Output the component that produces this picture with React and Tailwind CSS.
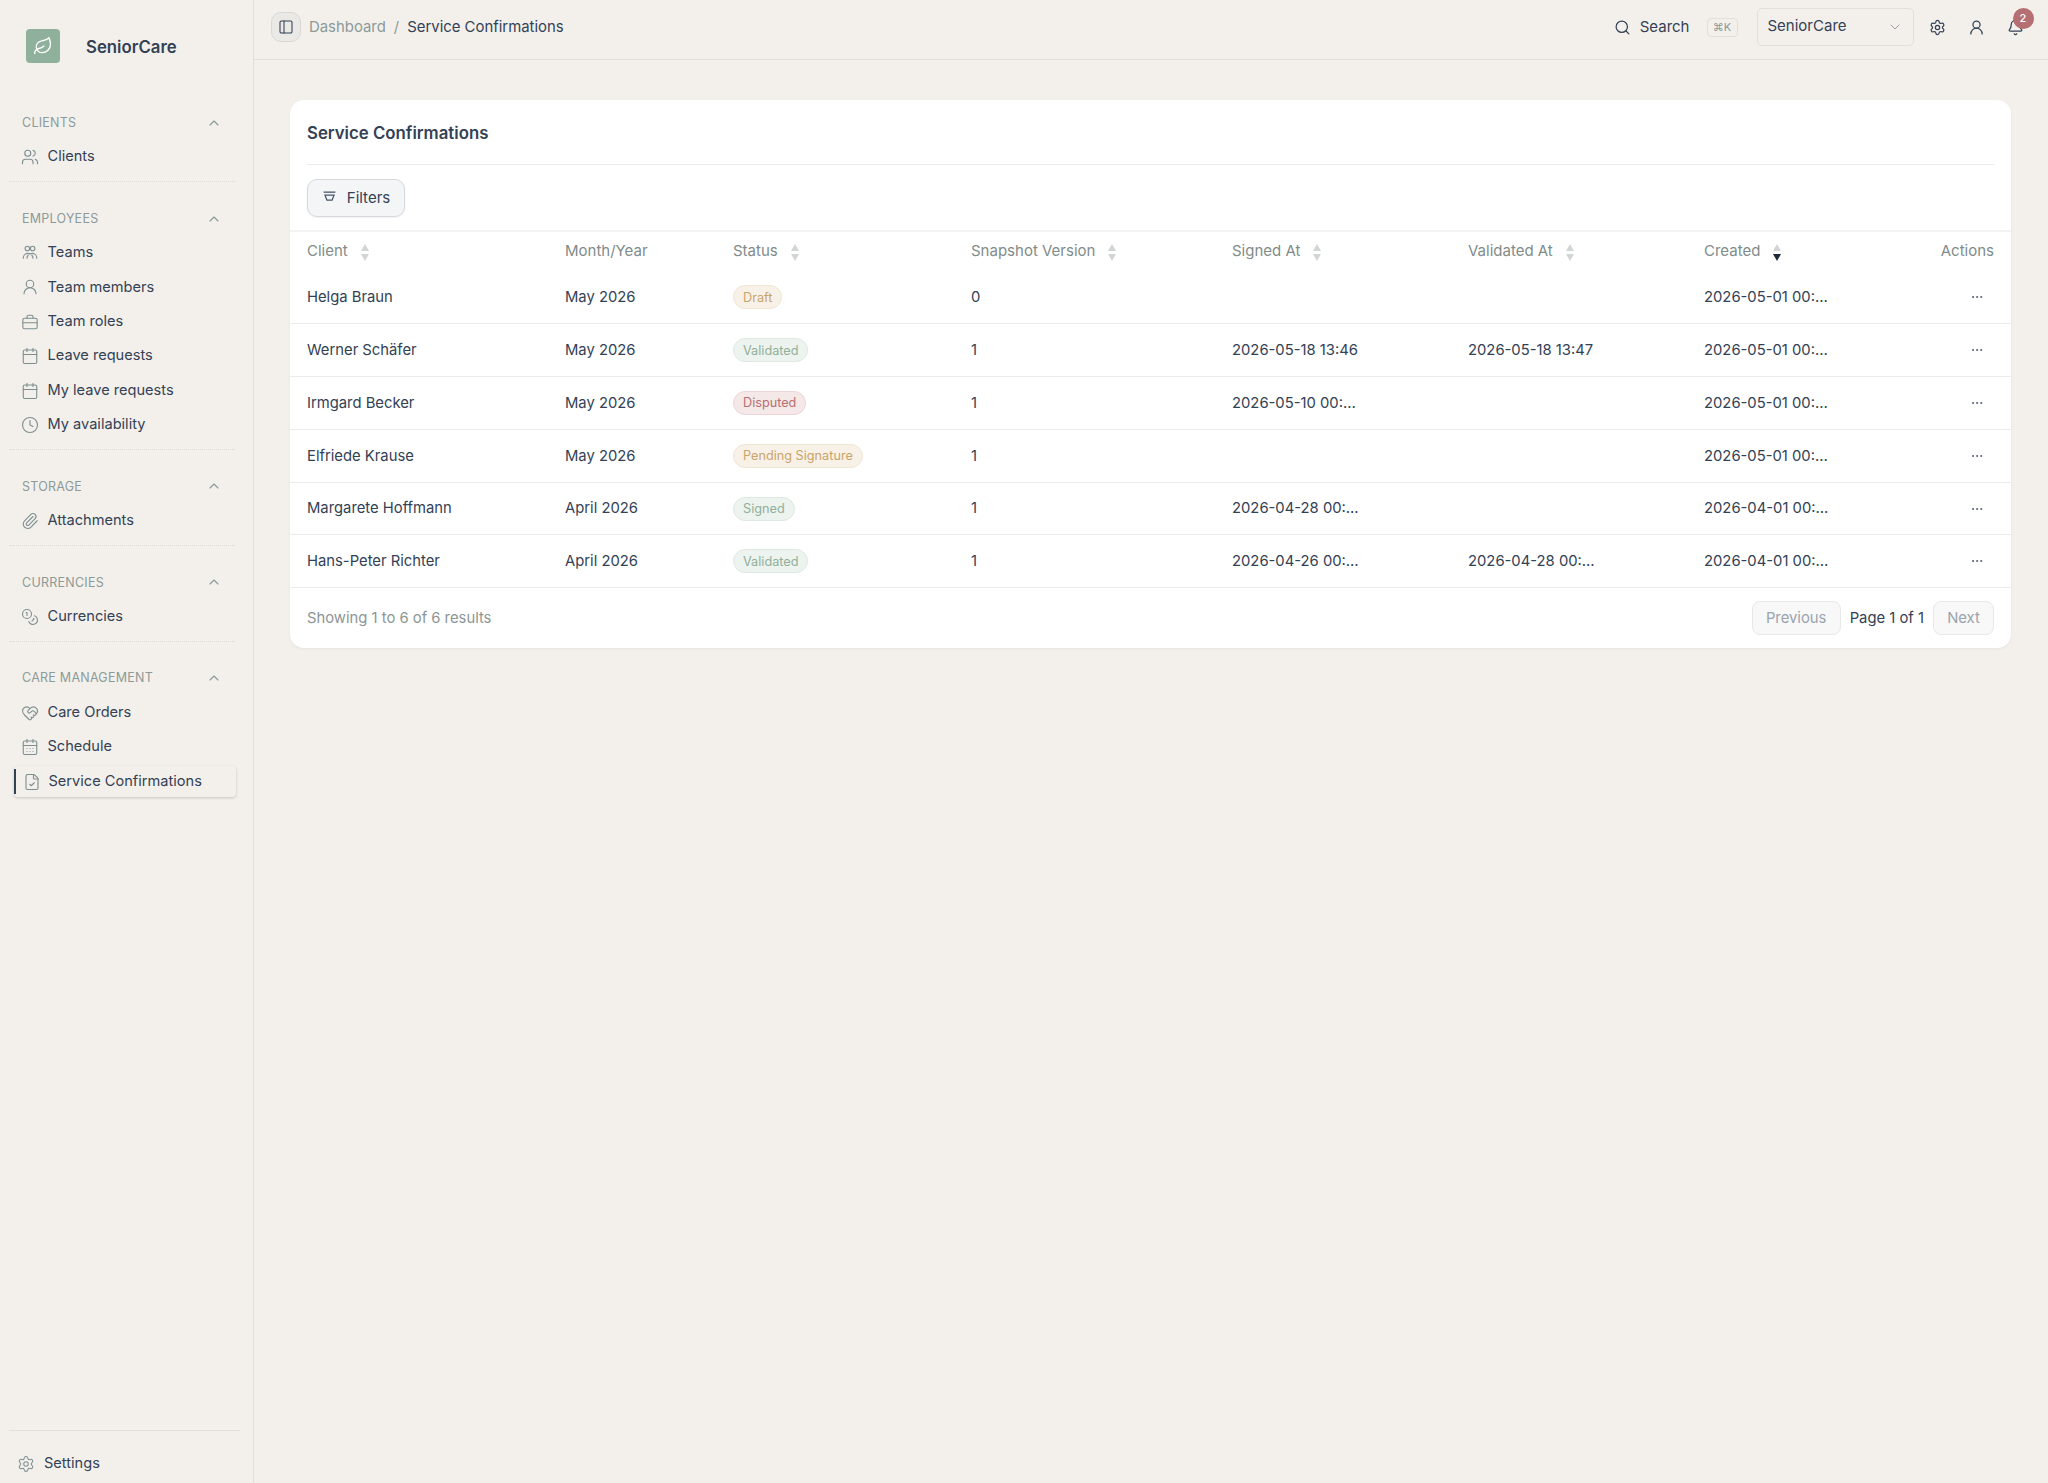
import {
  Users, UserRound, Calendar, Clock, Paperclip, Coins, HeartHandshake, CalendarDays,
  FileCheck, Settings, Bell, Search, ChevronDown, ChevronUp, PanelLeft, Leaf, Ellipsis,
} from 'lucide-react'

function TeamsIcon({ size = 18, className }) {
  return (
    <svg width={size} height={size} viewBox="0 0 24 24" fill="none" stroke="currentColor" strokeWidth="1.5" strokeLinecap="round" className={className}>
      <circle cx="8.500" cy="6" r="3" />
      <circle cx="15.500" cy="6" r="3" />
      <path d="M3 19c0-3.500 2.500-6.500 6-6.500 1.200 0 2.200.3 3 .9.8-.6 1.800-.9 3-.9 3.500 0 6 3 6 6.500" />
      <path d="M8 19c0-1.500.5-3 1.500-4M16 19c0-1.500-.5-3-1.500-4" />
    </svg>
  )
}

function RolesIcon({ size = 18, className }) {
  return (
    <svg width={size} height={size} viewBox="0 0 24 24" fill="none" stroke="currentColor" strokeWidth="1.5" strokeLinecap="round" strokeLinejoin="round" className={className}>
      <rect x="2.500" y="7" width="19" height="14" rx="2" />
      <path d="M8 7V5a2 2 0 0 1 2-2h4a2 2 0 0 1 2 2v2" />
      <path d="M2.500 13h19" />
    </svg>
  )
}

function FilterIcon() {
  return (
    <svg width="15" height="15" viewBox="0 0 14 14" fill="none" stroke="currentColor" strokeWidth="1.2" className="text-[#475569] -mt-[2px]">
      <path d="M1.500 2h11" />
      <path d="M2.800 4.800h8.400l-1.800 4.700H4.600z" />
    </svg>
  )
}

const sections = [
  { label: 'Clients', items: [{ name: 'Clients', icon: Users }] },
  {
    label: 'Employees',
    items: [
      { name: 'Teams', icon: TeamsIcon },
      { name: 'Team members', icon: UserRound },
      { name: 'Team roles', icon: RolesIcon },
      { name: 'Leave requests', icon: Calendar },
      { name: 'My leave requests', icon: Calendar },
      { name: 'My availability', icon: Clock },
    ],
  },
  { label: 'Storage', items: [{ name: 'Attachments', icon: Paperclip }] },
  { label: 'Currencies', items: [{ name: 'Currencies', icon: Coins }] },
  {
    label: 'Care Management',
    last: true,
    items: [
      { name: 'Care Orders', icon: HeartHandshake },
      { name: 'Schedule', icon: CalendarDays },
    ],
  },
]

const badgeStyles = {
  Draft: 'bg-[#f8f1e8] border-[#f1e5d3] text-[#c9a468]',
  'Pending Signature': 'bg-[#f8f1e8] border-[#f1e5d3] text-[#c9a468]',
  Validated: 'bg-[#edf3ee] border-[#dfe9e2] text-[#8fb09a]',
  Signed: 'bg-[#edf3ee] border-[#dfe9e2] text-[#8fb09a]',
  Disputed: 'bg-[#f5e8e8] border-[#edd5d7] text-[#b56f72]',
}

const rows = [
  ['Helga Braun', 'May 2026', 'Draft', '0', '', '', '2026-05-01 00:…'],
  ['Werner Schäfer', 'May 2026', 'Validated', '1', '2026-05-18 13:46', '2026-05-18 13:47', '2026-05-01 00:…'],
  ['Irmgard Becker', 'May 2026', 'Disputed', '1', '2026-05-10 00:…', '', '2026-05-01 00:…'],
  ['Elfriede Krause', 'May 2026', 'Pending Signature', '1', '', '', '2026-05-01 00:…'],
  ['Margarete Hoffmann', 'April 2026', 'Signed', '1', '2026-04-28 00:…', '', '2026-04-01 00:…'],
  ['Hans-Peter Richter', 'April 2026', 'Validated', '1', '2026-04-26 00:…', '2026-04-28 00:…', '2026-04-01 00:…'],
]

function NavItem({ name, icon: Icon }) {
  return (
    <a className="h-[34.4px] pl-[21px] flex items-center gap-[8.5px] text-[#334155]">
      <Icon size={18} strokeWidth={1.5} className="text-[#7f8f90] shrink-0" />
      <span>{name}</span>
    </a>
  )
}

function Sidebar() {
  return (
    <aside className="w-[254px] shrink-0 border-r border-[#e2dfda] flex flex-col justify-between text-[14.6px]">
      <div>
        <div className="h-[106.5px] pl-[26px] pt-[29px] flex items-start gap-[26px]">
          <div className="w-[34px] h-[34px] rounded-[4px] bg-[#8fb09a] flex items-center justify-center">
            <Leaf size={20} strokeWidth={1.6} className="text-white" />
          </div>
          <div className="h-[34px] mt-[2px] flex items-center text-[16.8px] font-semibold text-[#334155]">SeniorCare</div>
        </div>
        {sections.map(s => (
          <div key={s.label} className={s.last ? '' : 'ml-[9px] mr-[18px] pb-[7px] mb-[20px] border-b border-dotted border-[#dcdad5]'}>
            <div className={`h-[33.5px] flex items-center justify-between text-[12.5px] uppercase tracking-[0.02em] text-[#8c9a98] ${s.last ? 'pl-[22px] pr-[31px]' : 'pl-[13px] pr-[13px]'}`}>
              <span>{s.label}</span>
              <ChevronUp size={16} strokeWidth={1.75} className="-mt-[1px]" />
            </div>
            <div className={s.last ? '' : '-ml-[9px] -mr-[18px]'}>
              {s.items.map(i => <NavItem key={i.name} {...i} />)}
            </div>
          </div>
        ))}
        <a className="relative mt-[2px] ml-[14px] w-[222px] h-[31px] pl-[9px] flex items-center gap-[7.5px] rounded-[4px] bg-[#f3f0ec] text-[#334155] shadow-[0_1px_3px_rgba(0,0,0,0.18)]">
          <span className="absolute left-0 top-[3px] bottom-[3px] w-[2px] bg-[#334155]" />
          <FileCheck size={18} strokeWidth={1.5} className="text-[#7f8f90] shrink-0" />
          <span>Service Confirmations</span>
        </a>
      </div>
      <div className="mx-[9px] w-[231px] border-t border-[#e2dfda] pt-[23px] pb-[9px]">
        <a className="h-[20px] pl-[8px] flex items-center gap-[9px] text-[#334155]">
          <Settings size={18} strokeWidth={1.4} className="text-[#7f8f90]" />
          <span>Settings</span>
        </a>
      </div>
    </aside>
  )
}

function Header() {
  return (
    <header className="h-[60px] shrink-0 border-b border-[#e2dfda] pl-[17px] pr-[22.5px] pb-[5px] flex items-center justify-between text-[15px] text-[#334155]">
      <div className="flex items-center text-[14.9px]">
        <button className="w-[30px] h-[30px] rounded-[10px] border border-[#d8d8d6] bg-[#ebe9e5] flex items-center justify-center -mt-[1px]">
          <PanelLeft size={16} strokeWidth={1.6} />
        </button>
        <span className="ml-[8px] text-[#8c9a98]">Dashboard</span>
        <span className="mx-[8px] text-[#8c9a98]">/</span>
        <span>Service Confirmations</span>
      </div>
      <div className="flex items-center">
        <Search size={17} strokeWidth={1.75} />
        <span className="ml-[9px]">Search</span>
        <kbd className="ml-[17px] w-[31px] h-[19px] rounded-[4px] border border-[#e2dfda] text-[11px] text-[#8c9a98] flex items-center justify-center [font-family:Inter,sans-serif]">⌘K</kbd>
        <div className="ml-[19px] w-[157px] h-[38px] rounded-[5px] border border-[#e2dfda] pl-[10px] pr-[10px] flex items-center justify-between -mt-[1px]">
          <span>SeniorCare</span>
          <ChevronDown size={16} strokeWidth={1.5} className="text-[#9aa3ad]" />
        </div>
        <Settings size={17} strokeWidth={1.75} className="ml-[15px]" />
        <UserRound size={17} strokeWidth={1.75} className="ml-[22px]" />
        <div className="relative ml-[22px] mr-[2px]">
          <Bell size={17} strokeWidth={1.75} />
          <span className="absolute -top-[11px] left-[6px] w-[21px] h-[21px] rounded-full bg-[#b56f72] text-white text-[11px] font-medium flex items-center justify-center">2</span>
        </div>
      </div>
    </header>
  )
}

function SortCarets({ active }) {
  return (
    <span className="inline-flex flex-col gap-[3px] ml-[13px] align-middle">
      <span className="w-0 h-0 border-x-[4px] border-x-transparent border-b-[7px] border-b-[#d2d5d6]" />
      <span className={`w-0 h-0 border-x-[4px] border-x-transparent border-t-[7px] ${active ? 'border-t-[#1e293b]' : 'border-t-[#d2d5d6]'}`} />
    </span>
  )
}

function Badge({ status }) {
  return (
    <span className={`inline-flex h-[24px] items-center rounded-full border px-[9px] text-[12.7px] ${badgeStyles[status]}`}>{status}</span>
  )
}

function Table() {
  const heads = [
    ['Client', true], ['Month/Year', false], ['Status', true], ['Snapshot Version', true],
    ['Signed At', true], ['Validated At', true], ['Created', true, true],
  ]
  return (
    <table className="w-full table-fixed text-left text-[14.8px] text-[#334155]">
      <colgroup>
        <col className="w-[258px]" />
        <col className="w-[168px]" />
        <col className="w-[238px]" />
        <col className="w-[261px]" />
        <col className="w-[236px]" />
        <col className="w-[236px]" />
        <col className="w-[190px]" />
        <col />
      </colgroup>
      <thead>
        <tr className="h-[40px] border-t-2 border-[#f3f3f2] text-[#7f8c8a] text-[15px]">
          {heads.map(([h, sort, active]) => (
            <th key={h} className="pl-[17px] font-normal">
              {h}
              {sort && <SortCarets active={active} />}
            </th>
          ))}
          <th className="pr-[17px] text-right font-normal">Actions</th>
        </tr>
      </thead>
      <tbody>
        {rows.map(r => (
          <tr key={r[0]} className="h-[52.8px] border-b border-[#ebebeb]">
            <td className="pl-[17px]">{r[0]}</td>
            <td className="pl-[17px]">{r[1]}</td>
            <td className="pl-[17px]"><Badge status={r[2]} /></td>
            <td className="pl-[17px]">{r[3]}</td>
            <td className="pl-[17px]">{r[4]}</td>
            <td className="pl-[17px]">{r[5]}</td>
            <td className="pl-[17px]">{r[6]}</td>
            <td className="pr-[27px]">
              <div className="flex justify-end"><Ellipsis size={14} strokeWidth={1.5} className="text-[#475569]" /></div>
            </td>
          </tr>
        ))}
      </tbody>
    </table>
  )
}

export default function App() {
  return (
    <div className="h-screen flex bg-[#f3f0ec] [font-family:Inter,sans-serif] overflow-hidden">
      <Sidebar />
      <div className="flex-1 flex flex-col min-w-0">
        <Header />
        <main className="flex-1 pt-[40px] pl-[36px] pr-[37px]">
          <div className="rounded-[14px] bg-white shadow-[0_1px_3px_rgba(0,0,0,0.05)]">
            <div className="px-[17px]">
              <h1 className="h-[65px] pt-[3px] flex items-center text-[16.8px] font-semibold text-[#334155] border-b border-[#ebebeb]">Service Confirmations</h1>
              <div className="pt-[14px] pb-[13px]">
                <button className="w-[98px] h-[38px] rounded-[10px] border border-[#d5d9de] bg-[#f3f5f7] shadow-[0_1px_2px_rgba(0,0,0,0.06)] flex items-center justify-center gap-[10px] text-[15px] text-[#334155]">
                  <FilterIcon />
                  Filters
                </button>
              </div>
            </div>
            <Table />
            <div className="h-[60px] px-[17px] flex items-center justify-between text-[14.8px]">
              <span className="text-[#8b9695]">Showing 1 to 6 of 6 results</span>
              <div className="flex items-center text-[#334155]">
                <button className="h-[34px] w-[89px] rounded-[8px] border border-[#e8e8e8] bg-[#f8f8f8] text-[#9aa3ad]">Previous</button>
                <span className="mx-[9px]">Page 1 of 1</span>
                <button className="h-[34px] w-[61px] rounded-[8px] border border-[#e8e8e8] bg-[#f8f8f8] text-[#9aa3ad]">Next</button>
              </div>
            </div>
          </div>
        </main>
      </div>
    </div>
  )
}
